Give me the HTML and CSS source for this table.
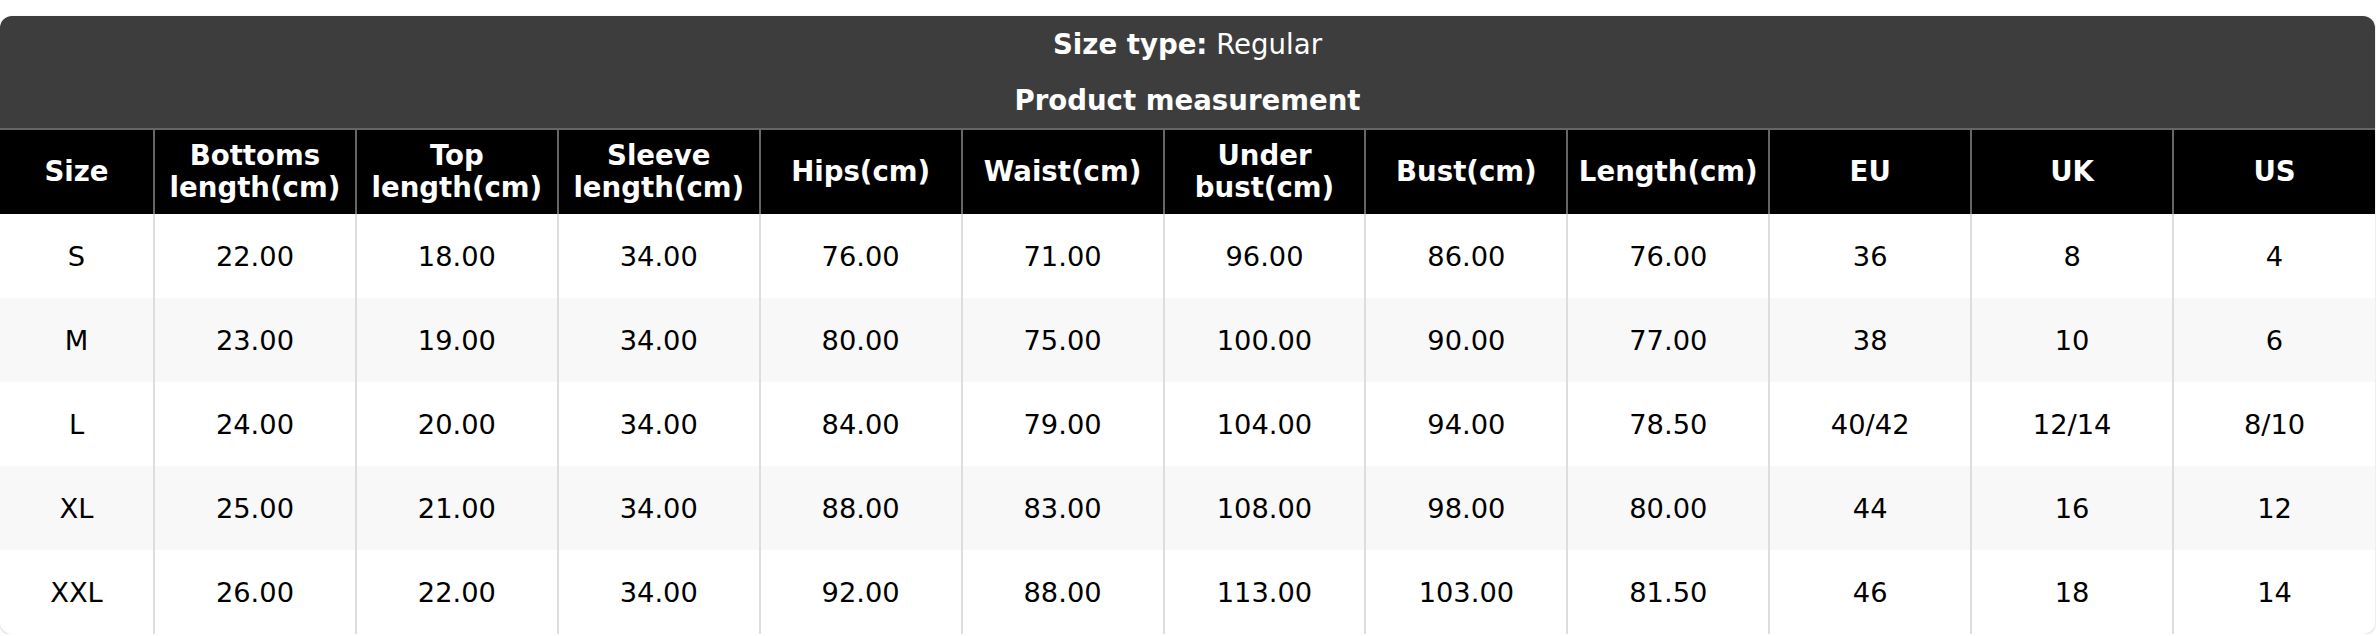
FILE: index.html
```html
<!DOCTYPE html>
<html>
<head>
<meta charset="utf-8">
<link rel="stylesheet" href="styles.css">
</head>
<body>
<div class="card">
  <div class="titles">
    <div class="title-row"><span><b>Size type:</b> Regular</span></div>
    <div class="title-row"><span><b>Product measurement</b></span></div>
  </div>
  <table class="sizes">
    <colgroup>
      <col class="c-first">
      <col><col><col><col><col><col><col><col><col><col><col>
    </colgroup>
    <thead>
      <tr>
        <th>Size</th>
        <th>Bottoms<br>length(cm)</th>
        <th>Top<br>length(cm)</th>
        <th>Sleeve<br>length(cm)</th>
        <th>Hips(cm)</th>
        <th>Waist(cm)</th>
        <th>Under<br>bust(cm)</th>
        <th>Bust(cm)</th>
        <th>Length(cm)</th>
        <th>EU</th>
        <th>UK</th>
        <th>US</th>
      </tr>
    </thead>
    <tbody>
      <tr><td>S</td><td>22.00</td><td>18.00</td><td>34.00</td><td>76.00</td><td>71.00</td><td>96.00</td><td>86.00</td><td>76.00</td><td>36</td><td>8</td><td>4</td></tr>
      <tr><td>M</td><td>23.00</td><td>19.00</td><td>34.00</td><td>80.00</td><td>75.00</td><td>100.00</td><td>90.00</td><td>77.00</td><td>38</td><td>10</td><td>6</td></tr>
      <tr><td>L</td><td>24.00</td><td>20.00</td><td>34.00</td><td>84.00</td><td>79.00</td><td>104.00</td><td>94.00</td><td>78.50</td><td>40/42</td><td>12/14</td><td>8/10</td></tr>
      <tr><td>XL</td><td>25.00</td><td>21.00</td><td>34.00</td><td>88.00</td><td>83.00</td><td>108.00</td><td>98.00</td><td>80.00</td><td>44</td><td>16</td><td>12</td></tr>
      <tr><td>XXL</td><td>26.00</td><td>22.00</td><td>34.00</td><td>92.00</td><td>88.00</td><td>113.00</td><td>103.00</td><td>81.50</td><td>46</td><td>18</td><td>14</td></tr>
    </tbody>
  </table>
</div>
</body>
</html>
```
FILE: styles.css
```css
html, body {
  margin: 0;
  padding: 0;
  background: #ffffff;
}
body {
  font-family: "DejaVu Sans", "Liberation Sans", sans-serif;
  padding-top: 16px;
}
.card {
  width: 2375px;
  border-radius: 12px;
  overflow: hidden;
  background: #ffffff;
  box-shadow: 0 1px 3px rgba(0, 0, 0, 0.18);
}
.titles {
  background: #3d3d3d;
  color: #ffffff;
  border-bottom: 2px solid #666666;
}
.title-row {
  height: 56px;
  display: flex;
  align-items: center;
  justify-content: center;
  font-size: 27.6px;
}
.sizes {
  width: 100%;
  table-layout: fixed;
  border-collapse: collapse;
}
.c-first {
  width: 154px;
}
.sizes th {
  background: #000000;
  color: #ffffff;
  font-weight: bold;
  font-size: 27.6px;
  line-height: 32px;
  height: 84px;
  padding: 0;
  text-align: center;
  vertical-align: middle;
  border-left: 2px solid #666666;
  border-right: 2px solid #666666;
}
.sizes td {
  font-size: 27.3px;
  color: #000000;
  height: 84px;
  padding: 0;
  text-align: center;
  vertical-align: middle;
  border-left: 2px solid #dddddd;
  border-right: 2px solid #dddddd;
}
.sizes tr > :first-child {
  border-left: none;
}
.sizes tr > :last-child {
  border-right: none;
}
.sizes tbody tr:nth-child(even) td {
  background: #f8f8f8;
}
```
